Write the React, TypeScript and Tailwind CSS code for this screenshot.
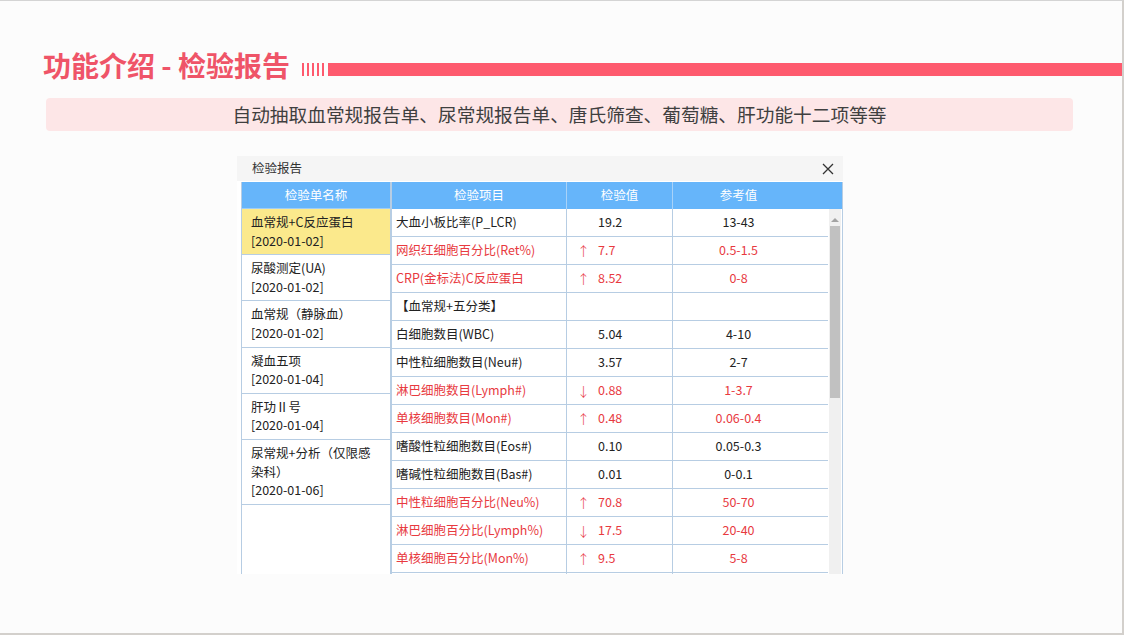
import React from 'react';

const reports = [
  { name: ['血常规+C反应蛋白'], date: '[2020-01-02]', active: true },
  { name: ['尿酸测定(UA)'], date: '[2020-01-02]' },
  { name: ['血常规（静脉血）'], date: '[2020-01-02]' },
  { name: ['凝血五项'], date: '[2020-01-04]' },
  { name: ['肝功Ⅱ号'], date: '[2020-01-04]' },
  { name: ['尿常规+分析（仅限感', '染科）'], date: '[2020-01-06]' },
];

type Row = { item: string; value?: string; ref?: string; flag?: 'up' | 'down' };

const rows: Row[] = [
  { item: '大血小板比率(P_LCR)', value: '19.2', ref: '13-43' },
  { item: '网织红细胞百分比(Ret%)', value: '7.7', ref: '0.5-1.5', flag: 'up' },
  { item: 'CRP(金标法)C反应蛋白', value: '8.52', ref: '0-8', flag: 'up' },
  { item: '【血常规+五分类】' },
  { item: '白细胞数目(WBC)', value: '5.04', ref: '4-10' },
  { item: '中性粒细胞数目(Neu#)', value: '3.57', ref: '2-7' },
  { item: '淋巴细胞数目(Lymph#)', value: '0.88', ref: '1-3.7', flag: 'down' },
  { item: '单核细胞数目(Mon#)', value: '0.48', ref: '0.06-0.4', flag: 'up' },
  { item: '嗜酸性粒细胞数目(Eos#)', value: '0.10', ref: '0.05-0.3' },
  { item: '嗜碱性粒细胞数目(Bas#)', value: '0.01', ref: '0-0.1' },
  { item: '中性粒细胞百分比(Neu%)', value: '70.8', ref: '50-70', flag: 'up' },
  { item: '淋巴细胞百分比(Lymph%)', value: '17.5', ref: '20-40', flag: 'down' },
  { item: '单核细胞百分比(Mon%)', value: '9.5', ref: '5-8', flag: 'up' },
  { item: '' },
];

const font = { fontFamily: '"Noto Sans CJK SC", "Noto Sans", sans-serif' };

export default function App() {
  return (
    <div
      className="w-[1124px] h-[635px] overflow-hidden bg-[#fcfcfc] border-t border-t-[#d4d4d4] border-r-2 border-r-[#d3d0cc] border-b-2 border-b-[#d3d0cc]"
      style={font}
    >
      {/* title */}
      <div className="flex items-center pl-[43px] pt-[46px] h-[82px]">
        <h1 className="text-[28px] leading-[36px] font-bold text-[#ef5468] whitespace-nowrap">
          功能介绍 - 检验报告
        </h1>
        <div className="flex items-center gap-[3px] ml-[12px] mt-[8px]">
          <span className="w-[2px] h-[13px] bg-[#fe5a6e]" />
          <span className="w-[2px] h-[13px] bg-[#fe5a6e]" />
          <span className="w-[2px] h-[13px] bg-[#fe5a6e]" />
          <span className="w-[2px] h-[13px] bg-[#fe5a6e]" />
          <span className="w-[2px] h-[13px] bg-[#fe5a6e]" />
        </div>
        <div className="flex-1 h-[13px] bg-[#fe5a6e] ml-[4px] mt-[8px]" />
      </div>

      {/* banner */}
      <div className="ml-[46px] mt-[15px] w-[1027px] h-[33px] rounded-[4px] bg-[#fde6e7] flex items-center justify-center">
        <p className="text-[18.7px] text-[#3f3f3f] whitespace-nowrap">
          自动抽取血常规报告单、尿常规报告单、唐氏筛查、葡萄糖、肝功能十二项等等
        </p>
      </div>

      {/* dialog */}
      <div className="ml-[237px] mt-[25px] w-[606px] h-[418px] overflow-hidden bg-white text-[12.5px]">
        <div className="h-[25px] bg-[#f5f5f5] flex items-center justify-between pl-[15px] pr-[9px]">
          <span className="text-[#333]">检验报告</span>
          <svg width="12" height="12" viewBox="0 0 12 12" className="mb-[-1px]">
            <path d="M1 1 L11 11 M11 1 L1 11" stroke="#333" strokeWidth="1.3" />
          </svg>
        </div>

        <div className="flex pl-[4px] pt-[1px] h-[393px]">
          {/* left list */}
          <div className="w-[150px] flex flex-col border-x border-[#b7cde3] shrink-0">
            <div className="h-[27px] bg-[#66b5fa] text-white flex items-center justify-center border-b border-[#9fcdf6]">
              检验单名称
            </div>
            {reports.map((r, i) => (
              <div
                key={i}
                className={
                  'border-b border-[#b7cde3] pl-[9px] pt-[4px] pb-[4px] leading-[18.6px] text-[#222] ' +
                  (r.active ? 'bg-[#fbe98c]' : 'bg-white')
                }
              >
                {r.name.map((n) => (
                  <div key={n}>{n}</div>
                ))}
                <div>{r.date}</div>
              </div>
            ))}
          </div>

          {/* right table */}
          <div className="w-[452px] flex flex-col border-x border-[#b7cde3] shrink-0">
            <div className="h-[27px] bg-[#66b5fa] text-white flex shrink-0">
              <div className="w-[175px] border-r border-[#a8d2f8] flex items-center justify-center">检验项目</div>
              <div className="w-[106px] border-r border-[#a8d2f8] flex items-center justify-center">检验值</div>
              <div className="w-[131px] flex items-center justify-center">参考值</div>
              <div className="flex-1" />
            </div>
            <div className="flex flex-1 min-h-0">
              <div className="w-[436px] flex flex-col">
                {rows.map((r, i) => {
                  const red = !!r.flag;
                  const color = red ? 'text-[#e83a3f]' : 'text-[#222]';
                  return (
                    <div key={i} className={'h-[28px] flex shrink-0 border-b border-[#b7cde3] ' + color}>
                      <div className="w-[175px] border-r border-[#b7cde3] flex items-center pl-[4px] whitespace-nowrap">
                        {r.item}
                      </div>
                      <div className="w-[106px] border-r border-[#b7cde3] flex items-center pl-[10px]">
                        <span className="w-[21px] text-[13px] font-light">
                          {r.flag === 'up' ? '↑' : r.flag === 'down' ? '↓' : ''}
                        </span>
                        <span>{r.value}</span>
                      </div>
                      <div className="w-[131px] flex items-center justify-center">{r.ref}</div>
                      <div className="flex-1" />
                    </div>
                  );
                })}
              </div>
              <div className="ml-[1px] w-[12px] bg-[#f0f0f0] flex flex-col items-center">
                <svg width="8" height="5" viewBox="0 0 8 5" className="mt-[8px]">
                  <path d="M0 5 L4 1 L8 5 Z" fill="#a3a3a3" />
                </svg>
                <div className="mt-[4px] w-[10px] h-[172px] bg-[#c1c1c1]" />
              </div>
              <div className="w-[1px]" />
            </div>
          </div>
        </div>
      </div>
    </div>
  );
}
